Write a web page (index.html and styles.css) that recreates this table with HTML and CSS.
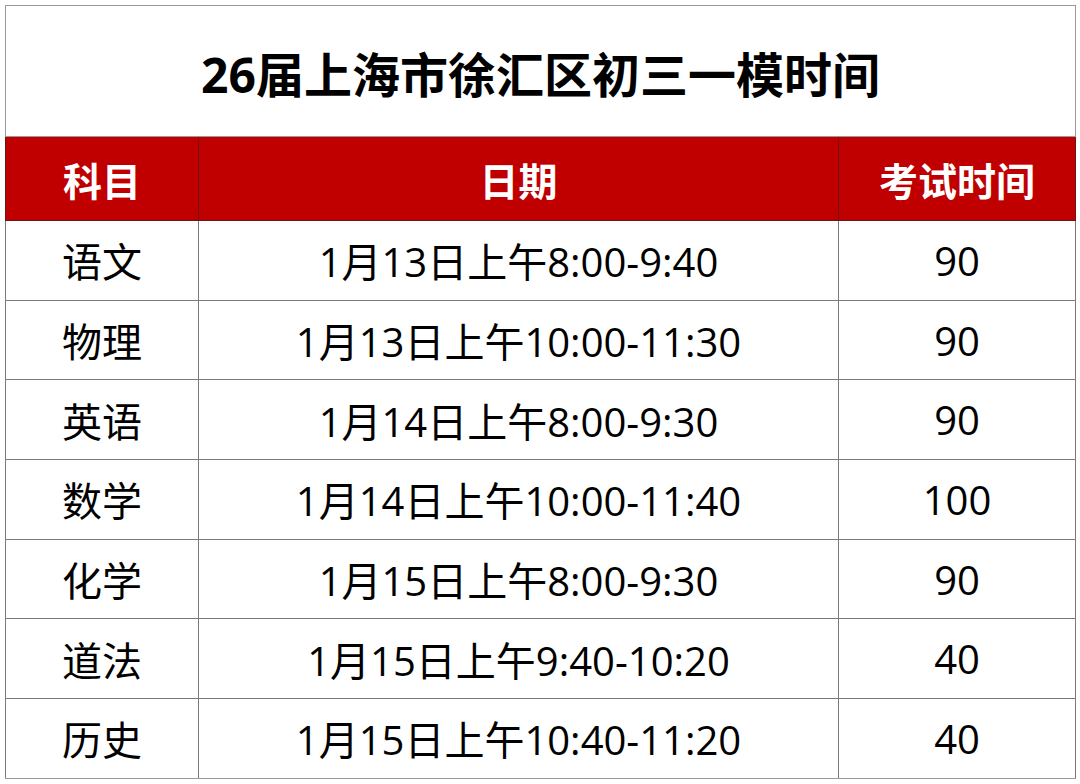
FILE: index.html
```html
<!DOCTYPE html>
<html lang="zh-CN">
<head>
<meta charset="utf-8">
<title>26届上海市徐汇区初三一模时间</title>
<link rel="stylesheet" href="styles.css">
</head>
<body>
<div class="page">
  <table class="sched">
    <colgroup>
      <col class="c1">
      <col class="c2">
      <col class="c3">
    </colgroup>
    <tr class="title-row"><td colspan="3" class="title">26届上海市徐汇区初三一模时间</td></tr>
    <tr class="head-row"><th>科目</th><th>日期</th><th>考试时间</th></tr>
    <tr class="row"><td>语文</td><td>1月13日上午8:00-9:40</td><td>90</td></tr>
    <tr class="row"><td>物理</td><td>1月13日上午10:00-11:30</td><td>90</td></tr>
    <tr class="row"><td>英语</td><td>1月14日上午8:00-9:30</td><td>90</td></tr>
    <tr class="row"><td>数学</td><td>1月14日上午10:00-11:40</td><td>100</td></tr>
    <tr class="row"><td>化学</td><td>1月15日上午8:00-9:30</td><td>90</td></tr>
    <tr class="row"><td>道法</td><td>1月15日上午9:40-10:20</td><td>40</td></tr>
    <tr class="row"><td>历史</td><td>1月15日上午10:40-11:20</td><td>40</td></tr>
  </table>
</div>
</body>
</html>
```

FILE: styles.css
```css
html, body {
  margin: 0;
  padding: 0;
  background: #ffffff;
}
.page {
  padding: 5px 0 0 5px;
  font-family: "Open Sans", "Noto Sans CJK SC", sans-serif;
  color: #000;
}
.sched {
  border-collapse: collapse;
  table-layout: fixed;
  width: 1070px;
  border: 1px solid #9a9a9a;
}
.c1 { width: 193px; }
.c2 { width: 640px; }
.c3 { width: 237px; }
.sched td, .sched th {
  border: 1px solid #7a7a7a;
  padding: 0;
  text-align: center;
  vertical-align: middle;
  white-space: nowrap;
}
.title-row td {
  height: 128px;
  font-size: 48px;
  font-weight: 700;
  border-color: #9a9a9a;
  padding-top: 2px;
}
.head-row th {
  height: 83px;
  background: #c00000;
  color: #ffffff;
  font-size: 39px;
  font-weight: 700;
  border-color: #6e1414;
}
.row td {
  height: 78.7px;
  font-size: 40px;
  font-weight: 400;
}
.row:last-child td {
  border-bottom-color: #9a9a9a;
}
```
